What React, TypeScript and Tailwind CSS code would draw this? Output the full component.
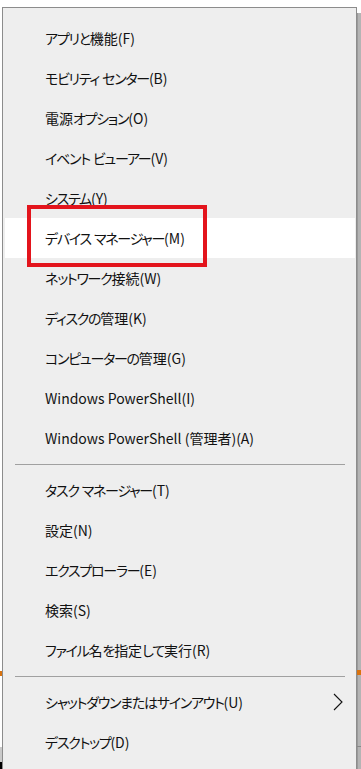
import React from 'react';

type Entry = { label: string; sep?: false; active?: boolean; sub?: boolean } | { sep: true };

const entries: Entry[] = [
  { label: 'アプリと機能(F)' },
  { label: 'モビリティ センター(B)' },
  { label: '電源オプション(O)' },
  { label: 'イベント ビューアー(V)' },
  { label: 'システム(Y)' },
  { label: 'デバイス マネージャー(M)', active: true },
  { label: 'ネットワーク接続(W)' },
  { label: 'ディスクの管理(K)' },
  { label: 'コンピューターの管理(G)' },
  { label: 'Windows PowerShell(I)' },
  { label: 'Windows PowerShell (管理者)(A)' },
  { sep: true },
  { label: 'タスク マネージャー(T)' },
  { label: '設定(N)' },
  { label: 'エクスプローラー(E)' },
  { label: '検索(S)' },
  { label: 'ファイル名を指定して実行(R)' },
  { sep: true },
  { label: 'シャットダウンまたはサインアウト(U)', sub: true },
  { label: 'デスクトップ(D)' },
];

// kana are set tighter than the kanji / latin parts
const Label = ({ text }: { text: string }) => (
  <span>
    {text.split(/([\u3040-\u30FF]+)/).map((part, i) =>
      /[\u3040-\u30FF]/.test(part) ? (
        <span key={i} className="tracking-[-0.09em]">
          {part}
        </span>
      ) : (
        <span key={i}>{part}</span>
      )
    )}
  </span>
);

const Chevron = () => (
  <svg width="10" height="18" viewBox="0 0 10 18" fill="none" className="shrink-0">
    <path d="M1 1 L9 9 L1 17" stroke="#111" strokeWidth="1.1" />
  </svg>
);

export default function App() {
  return (
    <div
      className="relative w-[361px] h-[769px] overflow-hidden bg-white flex pt-[7px] text-[#111]"
      style={{ fontFamily: '"Noto Sans CJK JP", "Noto Sans", sans-serif' }}
    >
      {/* left outside strip */}
      <div className="w-[2px] shrink-0 flex flex-col">
        <div className="h-[664px]" />
        <div className="h-[5px] bg-[#d9730f]" />
        <div className="h-[71px]" />
        <div className="h-[15px] bg-[#c9c9c9]" />
        <div className="flex-1 bg-black" />
      </div>

      {/* menu */}
      <div className="w-[355px] shrink-0 border border-b-0 border-[#8c8c8c] bg-[#eeeeee] pt-[10px] [font-feature-settings:'palt']">
        {entries.map((e, i) =>
          e.sep ? (
            <div key={i} className="h-[12px] flex items-center pl-[12px]">
              <div className="w-[330px] h-px bg-[#a0a0a0]" />
            </div>
          ) : (
            <div
              key={i}
              className={`h-[40px] ml-[2px] mr-[1px] flex items-center justify-between pl-[40px] pr-[12px] text-[14px] ${
                e.active ? 'bg-white' : ''
              }`}
            >
              <Label text={e.label} />
              {e.sub && <Chevron />}
            </div>
          )
        )}
      </div>

      {/* right shadow strip */}
      <div className="w-[4px] shrink-0 flex flex-col pt-[6px]">
        <div className="h-[657px] border-l border-[#9a9a9a] bg-[#b4b4b4]" />
        <div className="h-[5px] bg-[#d9730f]" />
        <div className="h-[71px] border-l border-[#9a9a9a] bg-[#b4b4b4]" />
        <div className="h-px bg-[#888]" />
        <div className="flex-1 border-l border-[#9a9a9a] bg-[#b4b4b4]" />
      </div>

      {/* red highlight frame */}
      <div className="absolute left-[27px] top-[205px] w-[180px] h-[62px] border-4 border-[#e3141c]" />
    </div>
  );
}
